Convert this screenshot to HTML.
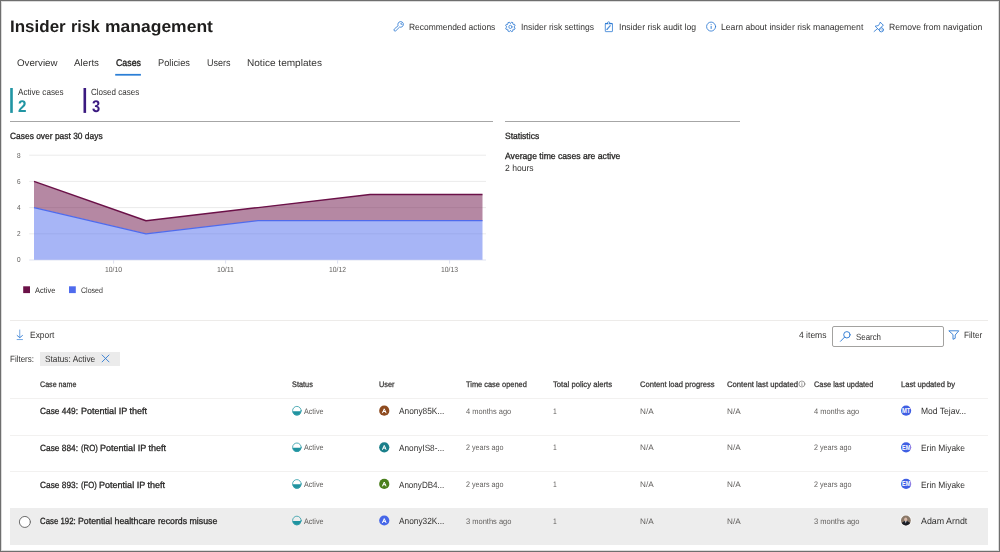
<!DOCTYPE html>
<html><head><meta charset="utf-8"><title>Insider risk management</title>
<style>
html,body{margin:0;padding:0;background:#fff;}
body{width:1000px;height:552px;position:relative;overflow:hidden;font-family:"Liberation Sans",sans-serif;}
.t{position:absolute;white-space:nowrap;transform-origin:0 50%;display:inline-block;text-rendering:geometricPrecision;}
.a{position:absolute;}
.frame{position:absolute;left:0;top:0;width:998px;height:550px;border:1px solid #6e6e6e;box-sizing:content-box;}
.frame2{position:absolute;left:1px;top:1px;width:996px;height:548px;border:1px solid #dcdcdc;box-sizing:content-box;}
.av{position:absolute;width:10.4px;height:10.4px;border-radius:50%;color:#fff;font-size:5.5px;font-weight:700;text-align:center;line-height:10.4px;}
</style></head><body>
<!-- section rules -->
<div class="a" style="left:10px;top:121px;width:483px;height:1px;background:#a6a6a6"></div>
<div class="a" style="left:505px;top:121px;width:235px;height:1px;background:#a6a6a6"></div>
<div class="a" style="left:10px;top:320px;width:978px;height:1px;background:#edebe9"></div>
<!-- chart -->
<svg class="a" style="left:0;top:140px" width="500" height="170" viewBox="0 140 500 170">
 <g stroke="#ebebeb" stroke-width="1">
  <line x1="29.2" y1="155.20" x2="486" y2="155.20"/>
  <line x1="29.2" y1="181.40" x2="486" y2="181.40"/>
  <line x1="29.2" y1="207.60" x2="486" y2="207.60"/>
  <line x1="29.2" y1="233.80" x2="486" y2="233.80"/>
  <line x1="29.2" y1="260" x2="486" y2="260" stroke="#dfe3f1"/>
  <line x1="113.6" y1="260" x2="113.6" y2="263.6" stroke="#dde1f0"/>
  <line x1="225.6" y1="260" x2="225.6" y2="263.6" stroke="#dde1f0"/>
  <line x1="337.6" y1="260" x2="337.6" y2="263.6" stroke="#dde1f0"/>
  <line x1="449.6" y1="260" x2="449.6" y2="263.6" stroke="#dde1f0"/>
 </g>
 <polygon points="34,181.40 146,220.70 258,207.60 370,194.50 482.5,194.50 482.5,220.70 370,220.70 258,220.70 146,233.80 34,207.60" fill="#6b1148" fill-opacity="0.5"/>
 <polygon points="34,207.60 146,233.80 258,220.70 370,220.70 482.5,220.70 482.5,259.7 34,259.7" fill="#4f6bed" fill-opacity="0.5"/>
 <polyline points="34,181.40 146,220.70 258,207.60 370,194.50 482.5,194.50" fill="none" stroke="#6b1148" stroke-width="1.45" stroke-linejoin="round"/>
 <polyline points="34,207.60 146,233.80 258,220.70 370,220.70 482.5,220.70" fill="none" stroke="#4f6bed" stroke-width="1.25" stroke-linejoin="round"/>
 <rect x="23.2" y="286.3" width="6.8" height="6.8" fill="#6b1148"/>
 <rect x="69" y="286.3" width="6.8" height="6.8" fill="#4f6bed"/>
</svg>
<!-- filter chip -->
<div class="a" style="left:40px;top:351.5px;width:80.2px;height:14.6px;background:#ebebeb"></div>
<!-- search box -->
<div class="a" style="left:832px;top:326.4px;width:110.2px;height:18.3px;border:1px solid #a3a2a0;border-radius:2px;box-sizing:content-box"></div>
<!-- row separators -->
<div class="a" style="left:10px;top:398px;width:978px;height:1px;background:#f2f1f0"></div>
<div class="a" style="left:10px;top:434.6px;width:978px;height:1px;background:#f2f1f0"></div>
<div class="a" style="left:10px;top:471.2px;width:978px;height:1px;background:#f2f1f0"></div>
<!-- highlighted row -->
<div class="a" style="left:10.3px;top:508.4px;width:977.6px;height:36.3px;background:#ededed"></div>
<svg class="a" style="left:0;top:0" width="1000" height="552" viewBox="0 0 1000 552" fill="none" stroke-linecap="round" stroke-linejoin="round">
<rect x="115.2" y="73.9" width="25.7" height="1.75" fill="#2b7fd6"/>
<rect x="10.2" y="88" width="2.6" height="24.9" fill="#2195a3"/>
<rect x="83.5" y="88" width="2.6" height="24.9" fill="#3b1a80"/>
<g stroke="#2f7bd3" stroke-width="0.85"><path d="M397.98 25.39 A2.8 2.8 0 1 1 399.61 27.02 L395.81 30.81 A1.15 1.15 0 0 1 394.19 29.19 Z"/><path d="M402.0 22.6 L400.6 24.0 L402.1 24.4" stroke-width="0.8"/></g>
<path d="M510.75 23.17 L511.46 22.17 L513.00 22.81 L512.79 24.01 L513.29 24.51 L514.49 24.30 L515.13 25.84 L514.13 26.55 L514.13 27.25 L515.13 27.96 L514.49 29.50 L513.29 29.29 L512.79 29.79 L513.00 30.99 L511.46 31.63 L510.75 30.63 L510.05 30.63 L509.34 31.63 L507.80 30.99 L508.01 29.79 L507.51 29.29 L506.31 29.50 L505.67 27.96 L506.67 27.25 L506.67 26.55 L505.67 25.84 L506.31 24.30 L507.51 24.51 L508.01 24.01 L507.80 22.81 L509.34 22.17 L510.05 23.17Z" stroke="#2f7bd3" stroke-width="0.85"/>
<circle cx="510.4" cy="26.9" r="1.6" stroke="#2f7bd3" stroke-width="0.75"/>
<g stroke="#2f7bd3" stroke-width="0.8"><rect x="605.3" y="23.45" width="7.15" height="8.2" rx="0.4"/><path d="M605.5 23.6 H612.3" stroke-width="1.25" stroke-linecap="butt"/><path d="M607.4 23.0 A1.25 1.25 0 0 1 609.9 23.0" /><circle cx="608.65" cy="23.55" r="0.55" fill="#fff" stroke="none"/><path d="M607.0 29.4 L610.5 25.4" stroke-width="1.3" stroke-linecap="butt" stroke-opacity="0.85"/><path d="M606.7 29.8 L607.3 29.2" stroke-width="1.0" stroke-linecap="round"/></g>
<circle cx="711.1" cy="26.6" r="4.5" stroke="#2f7bd3" stroke-width="0.85"/>
<path d="M711.15 25.9 V28.9" stroke="#2f7bd3" stroke-width="0.95" stroke-linecap="butt"/><circle cx="711.15" cy="24.5" r="0.5" fill="#2f7bd3"/>
<g stroke="#2f7bd3" stroke-width="0.85"><path d="M880.4 22.3 L883.4 25.3 L882.4 25.8 L881.0 27.9 L880.6 31.6 L875.1 26.2 L878.4 25.6 L879.9 23.3 Z"/><path d="M877.4 28.8 L874.1 31.5"/><circle cx="881.35" cy="29.85" r="2.05" fill="#fff"/><path d="M880.3 28.8 L882.4 30.9" stroke-width="0.6" stroke-opacity="0.8"/></g>
<g stroke="#2f7bd3" stroke-width="0.9"><path d="M19.75 330 V337.4" stroke-opacity="0.75"/><path d="M17.15 335.5 L19.75 337.7 L22.45 335.5"/><path d="M17.1 339.55 H22.5" stroke-opacity="0.75"/></g>
<g stroke="#2f7bd3" stroke-width="0.95"><circle cx="846.9" cy="334.8" r="3.2"/><path d="M844.6 337.1 L840.5 341.3"/></g>
<path d="M949.2 330.8 H958.8 L955.2 335 V338.3 L953 339.3 V335 Z" stroke="#2f7bd3" stroke-width="0.9"/>
<path d="M102.1 355 L109 361.9 M109 355 L102.1 361.9" stroke="#2f7bd3" stroke-width="0.9"/>
<circle cx="801.9" cy="384" r="3.0" stroke="#6a6866" stroke-width="0.65"/>
<path d="M801.9 383.6 V385.6" stroke="#6a6866" stroke-width="0.65"/><circle cx="801.9" cy="382.4" r="0.4" fill="#6a6866"/>
<circle cx="24.9" cy="521.95" r="5.5" stroke="#6e6e6e" stroke-width="1" fill="#fff"/>
<path d="M292.55 411.15 A4.35 4.35 0 0 0 301.25 411.15 Z" fill="#1f93a0"/>
<circle cx="296.9" cy="410.7" r="4.3" stroke="#38a0ab" stroke-width="0.85"/>
<circle cx="384.25" cy="410.7" r="5.1" fill="#8e4b1f"/>
<path d="M382.55 412.80 L384.25 408.80 L385.95 412.80 M383.2 411.50 H385.3" stroke="#fff" stroke-width="1.0"/>
<path d="M292.55 447.75 A4.35 4.35 0 0 0 301.25 447.75 Z" fill="#1f93a0"/>
<circle cx="296.9" cy="447.3" r="4.3" stroke="#38a0ab" stroke-width="0.85"/>
<circle cx="384.25" cy="447.3" r="5.1" fill="#1a7f8a"/>
<path d="M382.55 449.40 L384.25 445.40 L385.95 449.40 M383.2 448.10 H385.3" stroke="#fff" stroke-width="1.0"/>
<path d="M292.55 484.35 A4.35 4.35 0 0 0 301.25 484.35 Z" fill="#1f93a0"/>
<circle cx="296.9" cy="483.9" r="4.3" stroke="#38a0ab" stroke-width="0.85"/>
<circle cx="384.25" cy="483.9" r="5.1" fill="#4a7f1c"/>
<path d="M382.55 486.00 L384.25 482.00 L385.95 486.00 M383.2 484.70 H385.3" stroke="#fff" stroke-width="1.0"/>
<path d="M292.55 520.95 A4.35 4.35 0 0 0 301.25 520.95 Z" fill="#1f93a0"/>
<circle cx="296.9" cy="520.5" r="4.3" stroke="#38a0ab" stroke-width="0.85"/>
<circle cx="384.25" cy="520.5" r="5.1" fill="#4667e8"/>
<path d="M382.55 522.60 L384.25 518.60 L385.95 522.60 M383.2 521.30 H385.3" stroke="#fff" stroke-width="1.0"/>
<circle cx="906.1" cy="410.7" r="5.1" fill="#3f5fe3"/>
<text x="906.1" y="413.05" text-anchor="middle" font-family="Liberation Sans, sans-serif" font-weight="700" font-size="6.6" fill="#fff" textLength="8.4" lengthAdjust="spacingAndGlyphs">MT</text>
<circle cx="906.1" cy="447.3" r="5.1" fill="#3f5fe3"/>
<text x="906.1" y="449.65" text-anchor="middle" font-family="Liberation Sans, sans-serif" font-weight="700" font-size="6.6" fill="#fff" textLength="8.4" lengthAdjust="spacingAndGlyphs">EM</text>
<circle cx="906.1" cy="483.9" r="5.1" fill="#3f5fe3"/>
<text x="906.1" y="486.25" text-anchor="middle" font-family="Liberation Sans, sans-serif" font-weight="700" font-size="6.6" fill="#fff" textLength="8.4" lengthAdjust="spacingAndGlyphs">EM</text>
<defs><clipPath id="pc"><circle cx="905.9" cy="520.50" r="4.9"/></clipPath></defs>
<circle cx="905.9" cy="520.5" r="5.7" fill="#fafafa"/>
<g clip-path="url(#pc)"><rect x="900" y="514.5" width="12" height="12" fill="#8a7868"/><ellipse cx="905.9" cy="525.10" rx="4.6" ry="4.2" fill="#1b1e25"/><ellipse cx="905.7" cy="519.30" rx="1.5" ry="1.9" fill="#d9b9a8"/><path d="M905 521.10 L905.8 523.50 L906.6 521.10 Z" fill="#cfd3e0" stroke="none"/></g>
</svg>
<div id="txt" style="position:absolute;left:0;top:0;width:1000px;height:552px;will-change:transform">
<span class="t" style="left:9.90px;top:19px;font-size:16.6px;line-height:16.6px;font-weight:700;color:#1f1e1d;transform:scaleX(1.0235)">Insider</span>
<span class="t" style="left:71.00px;top:19px;font-size:16.6px;line-height:16.6px;font-weight:700;color:#1f1e1d;transform:scaleX(0.9752)">risk</span>
<span class="t" style="left:104.90px;top:19px;font-size:16.6px;line-height:16.6px;font-weight:700;color:#1f1e1d;transform:scaleX(1.0541)">management</span>
<span class="t" style="left:16.50px;top:59px;font-size:9.7px;line-height:9.7px;font-weight:400;color:#343332;transform:scaleX(1.0031)">Overview</span>
<span class="t" style="left:73.50px;top:59px;font-size:9.7px;line-height:9.7px;font-weight:400;color:#343332;transform:scaleX(1.0095)">Alerts</span>
<span class="t" style="left:115.50px;top:59px;font-size:9.7px;line-height:9.7px;font-weight:400;color:#252423;transform:scaleX(0.9101);-webkit-text-stroke:0.35px #252423">Cases</span>
<span class="t" style="left:157.50px;top:59px;font-size:9.7px;line-height:9.7px;font-weight:400;color:#343332;transform:scaleX(0.9584)">Policies</span>
<span class="t" style="left:206.50px;top:59px;font-size:9.7px;line-height:9.7px;font-weight:400;color:#343332;transform:scaleX(0.9284)">Users</span>
<span class="t" style="left:247.00px;top:59px;font-size:9.7px;line-height:9.7px;font-weight:400;color:#343332;transform:scaleX(1.0394)">Notice templates</span>
<span class="t" style="left:408.70px;top:23px;font-size:9px;line-height:9px;font-weight:400;color:#343332;transform:scaleX(0.9374)">Recommended actions</span>
<span class="t" style="left:520.70px;top:23px;font-size:9px;line-height:9px;font-weight:400;color:#343332;transform:scaleX(0.9464)">Insider risk settings</span>
<span class="t" style="left:618.90px;top:23px;font-size:9px;line-height:9px;font-weight:400;color:#343332;transform:scaleX(0.9632)">Insider risk audit log</span>
<span class="t" style="left:721.40px;top:23px;font-size:9px;line-height:9px;font-weight:400;color:#343332;transform:scaleX(0.9576)">Learn about insider risk management</span>
<span class="t" style="left:888.80px;top:23px;font-size:9px;line-height:9px;font-weight:400;color:#343332;transform:scaleX(0.9554)">Remove from navigation</span>
<span class="t" style="left:18.00px;top:88px;font-size:9px;line-height:9px;font-weight:400;color:#343332;transform:scaleX(0.9024)">Active cases</span>
<span class="t" style="left:91.20px;top:88px;font-size:9px;line-height:9px;font-weight:400;color:#343332;transform:scaleX(0.8921)">Closed cases</span>
<span class="t" style="left:18.30px;top:98px;font-size:17px;line-height:17px;font-weight:700;color:#2195a3;transform:scaleX(0.8924)">2</span>
<span class="t" style="left:92.00px;top:98px;font-size:17px;line-height:17px;font-weight:700;color:#3b1a80;transform:scaleX(0.8660)">3</span>
<span class="t" style="left:10.40px;top:132px;font-size:9px;line-height:9px;font-weight:400;color:#252423;transform:scaleX(0.9348);-webkit-text-stroke:0.28px #252423">Cases over past 30 days</span>
<span class="t" style="left:505.30px;top:132px;font-size:9px;line-height:9px;font-weight:400;color:#252423;transform:scaleX(0.9496);-webkit-text-stroke:0.28px #252423">Statistics</span>
<span class="t" style="left:505.30px;top:152px;font-size:9px;line-height:9px;font-weight:400;color:#252423;transform:scaleX(0.9576);-webkit-text-stroke:0.28px #252423">Average time cases are active</span>
<span class="t" style="left:505.30px;top:164px;font-size:9px;line-height:9px;font-weight:400;color:#343332;transform:scaleX(0.9523)">2 hours</span>
<span class="t" style="left:16.90px;top:152px;font-size:7.3px;line-height:7.3px;font-weight:400;color:#605e5c;transform:scaleX(0.8862)">8</span>
<span class="t" style="left:16.90px;top:178px;font-size:7.3px;line-height:7.3px;font-weight:400;color:#605e5c;transform:scaleX(0.8862)">6</span>
<span class="t" style="left:16.90px;top:204px;font-size:7.3px;line-height:7.3px;font-weight:400;color:#605e5c;transform:scaleX(0.8862)">4</span>
<span class="t" style="left:16.90px;top:230px;font-size:7.3px;line-height:7.3px;font-weight:400;color:#605e5c;transform:scaleX(0.8862)">2</span>
<span class="t" style="left:16.90px;top:256px;font-size:7.3px;line-height:7.3px;font-weight:400;color:#605e5c;transform:scaleX(0.8862)">0</span>
<span class="t" style="left:105.20px;top:266px;font-size:7.4px;line-height:7.4px;font-weight:400;color:#605e5c;transform:scaleX(0.9189)">10/10</span>
<span class="t" style="left:217.20px;top:266px;font-size:7.4px;line-height:7.4px;font-weight:400;color:#605e5c;transform:scaleX(0.9469)">10/11</span>
<span class="t" style="left:329.20px;top:266px;font-size:7.4px;line-height:7.4px;font-weight:400;color:#605e5c;transform:scaleX(0.9189)">10/12</span>
<span class="t" style="left:441.20px;top:266px;font-size:7.4px;line-height:7.4px;font-weight:400;color:#605e5c;transform:scaleX(0.9189)">10/13</span>
<span class="t" style="left:34.50px;top:287px;font-size:8px;line-height:8px;font-weight:400;color:#343332;transform:scaleX(0.9313)">Active</span>
<span class="t" style="left:80.60px;top:287px;font-size:8px;line-height:8px;font-weight:400;color:#343332;transform:scaleX(0.8793)">Closed</span>
<span class="t" style="left:30.00px;top:331px;font-size:9px;line-height:9px;font-weight:400;color:#343332;transform:scaleX(0.9379)">Export</span>
<span class="t" style="left:799.40px;top:331px;font-size:9px;line-height:9px;font-weight:400;color:#343332;transform:scaleX(0.9478)">4 items</span>
<span class="t" style="left:855.50px;top:333px;font-size:9px;line-height:9px;font-weight:400;color:#343332;transform:scaleX(0.8762)">Search</span>
<span class="t" style="left:964.40px;top:331px;font-size:9px;line-height:9px;font-weight:400;color:#343332;transform:scaleX(0.9100)">Filter</span>
<span class="t" style="left:10.40px;top:355px;font-size:9px;line-height:9px;font-weight:400;color:#343332;transform:scaleX(0.8889)">Filters:</span>
<span class="t" style="left:44.80px;top:355px;font-size:9px;line-height:9px;font-weight:400;color:#343332;transform:scaleX(0.9206)">Status: Active</span>
<span class="t" style="left:40.00px;top:381px;font-size:8px;line-height:8px;font-weight:400;color:#343332;transform:scaleX(0.8895);-webkit-text-stroke:0.25px #343332">Case name</span>
<span class="t" style="left:292.20px;top:381px;font-size:8px;line-height:8px;font-weight:400;color:#343332;transform:scaleX(0.9168);-webkit-text-stroke:0.25px #343332">Status</span>
<span class="t" style="left:379.00px;top:381px;font-size:8px;line-height:8px;font-weight:400;color:#343332;transform:scaleX(0.9117);-webkit-text-stroke:0.25px #343332">User</span>
<span class="t" style="left:466.20px;top:381px;font-size:8px;line-height:8px;font-weight:400;color:#343332;transform:scaleX(0.9278);-webkit-text-stroke:0.25px #343332">Time case opened</span>
<span class="t" style="left:553.00px;top:381px;font-size:8px;line-height:8px;font-weight:400;color:#343332;transform:scaleX(0.9615);-webkit-text-stroke:0.25px #343332">Total policy alerts</span>
<span class="t" style="left:640.10px;top:381px;font-size:8px;line-height:8px;font-weight:400;color:#343332;transform:scaleX(0.9477);-webkit-text-stroke:0.25px #343332">Content load progress</span>
<span class="t" style="left:726.70px;top:381px;font-size:8px;line-height:8px;font-weight:400;color:#343332;transform:scaleX(0.9615);-webkit-text-stroke:0.25px #343332">Content last updated</span>
<span class="t" style="left:814.10px;top:381px;font-size:8px;line-height:8px;font-weight:400;color:#343332;transform:scaleX(0.9194);-webkit-text-stroke:0.25px #343332">Case last updated</span>
<span class="t" style="left:901.00px;top:381px;font-size:8px;line-height:8px;font-weight:400;color:#343332;transform:scaleX(0.9484);-webkit-text-stroke:0.25px #343332">Last updated by</span>
<span class="t" style="left:40.20px;top:407px;font-size:9px;line-height:9px;font-weight:400;color:#252423;transform:scaleX(0.9261);-webkit-text-stroke:0.28px #252423">Case 449:</span>
<span class="t" style="left:80.50px;top:407px;font-size:9px;line-height:9px;font-weight:400;color:#252423;transform:scaleX(1.0032);-webkit-text-stroke:0.28px #252423">Potential IP theft</span>
<span class="t" style="left:304.20px;top:408px;font-size:8px;line-height:8px;font-weight:400;color:#605e5c;transform:scaleX(0.8946)">Active</span>
<span class="t" style="left:399.00px;top:407px;font-size:9px;line-height:9px;font-weight:400;color:#343332;transform:scaleX(0.9236)">Anony85K...</span>
<span class="t" style="left:466.20px;top:408px;font-size:8px;line-height:8px;font-weight:400;color:#605e5c;transform:scaleX(0.9323)">4 months ago</span>
<span class="t" style="left:553.20px;top:408px;font-size:8px;line-height:8px;font-weight:400;color:#605e5c;transform:scaleX(0.8500)">1</span>
<span class="t" style="left:640.00px;top:408px;font-size:8px;line-height:8px;font-weight:400;color:#605e5c;transform:scaleX(1.0192)">N/A</span>
<span class="t" style="left:726.70px;top:408px;font-size:8px;line-height:8px;font-weight:400;color:#605e5c;transform:scaleX(1.0192)">N/A</span>
<span class="t" style="left:814.00px;top:408px;font-size:8px;line-height:8px;font-weight:400;color:#605e5c;transform:scaleX(0.9323)">4 months ago</span>
<span class="t" style="left:921.00px;top:407px;font-size:9px;line-height:9px;font-weight:400;color:#343332;transform:scaleX(0.9475)">Mod Tejav...</span>
<span class="t" style="left:40.20px;top:444px;font-size:9px;line-height:9px;font-weight:400;color:#252423;transform:scaleX(0.9261);-webkit-text-stroke:0.28px #252423">Case 884:</span>
<span class="t" style="left:80.50px;top:444px;font-size:9px;line-height:9px;font-weight:400;color:#252423;transform:scaleX(0.8615);-webkit-text-stroke:0.28px #252423">(RO)</span>
<span class="t" style="left:100.40px;top:444px;font-size:9px;line-height:9px;font-weight:400;color:#252423;transform:scaleX(1.0032);-webkit-text-stroke:0.28px #252423">Potential IP theft</span>
<span class="t" style="left:304.20px;top:444px;font-size:8px;line-height:8px;font-weight:400;color:#605e5c;transform:scaleX(0.8946)">Active</span>
<span class="t" style="left:399.00px;top:444px;font-size:9px;line-height:9px;font-weight:400;color:#343332;transform:scaleX(0.9146)">AnonyIS8-...</span>
<span class="t" style="left:466.20px;top:444px;font-size:8px;line-height:8px;font-weight:400;color:#605e5c;transform:scaleX(0.8969)">2 years ago</span>
<span class="t" style="left:553.20px;top:444px;font-size:8px;line-height:8px;font-weight:400;color:#605e5c;transform:scaleX(0.8500)">1</span>
<span class="t" style="left:640.00px;top:444px;font-size:8px;line-height:8px;font-weight:400;color:#605e5c;transform:scaleX(1.0192)">N/A</span>
<span class="t" style="left:726.70px;top:444px;font-size:8px;line-height:8px;font-weight:400;color:#605e5c;transform:scaleX(1.0192)">N/A</span>
<span class="t" style="left:814.00px;top:444px;font-size:8px;line-height:8px;font-weight:400;color:#605e5c;transform:scaleX(0.8945)">2 years ago</span>
<span class="t" style="left:921.00px;top:444px;font-size:9px;line-height:9px;font-weight:400;color:#343332;transform:scaleX(0.9359)">Erin Miyake</span>
<span class="t" style="left:40.20px;top:481px;font-size:9px;line-height:9px;font-weight:400;color:#252423;transform:scaleX(0.9261);-webkit-text-stroke:0.28px #252423">Case 893:</span>
<span class="t" style="left:80.50px;top:481px;font-size:9px;line-height:9px;font-weight:400;color:#252423;transform:scaleX(0.8541);-webkit-text-stroke:0.28px #252423">(FO)</span>
<span class="t" style="left:99.40px;top:481px;font-size:9px;line-height:9px;font-weight:400;color:#252423;transform:scaleX(1.0032);-webkit-text-stroke:0.28px #252423">Potential IP theft</span>
<span class="t" style="left:304.20px;top:481px;font-size:8px;line-height:8px;font-weight:400;color:#605e5c;transform:scaleX(0.8946)">Active</span>
<span class="t" style="left:399.00px;top:481px;font-size:9px;line-height:9px;font-weight:400;color:#343332;transform:scaleX(0.8965)">AnonyDB4...</span>
<span class="t" style="left:466.20px;top:481px;font-size:8px;line-height:8px;font-weight:400;color:#605e5c;transform:scaleX(0.8969)">2 years ago</span>
<span class="t" style="left:553.20px;top:481px;font-size:8px;line-height:8px;font-weight:400;color:#605e5c;transform:scaleX(0.8500)">1</span>
<span class="t" style="left:640.00px;top:481px;font-size:8px;line-height:8px;font-weight:400;color:#605e5c;transform:scaleX(1.0192)">N/A</span>
<span class="t" style="left:726.70px;top:481px;font-size:8px;line-height:8px;font-weight:400;color:#605e5c;transform:scaleX(1.0192)">N/A</span>
<span class="t" style="left:814.00px;top:481px;font-size:8px;line-height:8px;font-weight:400;color:#605e5c;transform:scaleX(0.8945)">2 years ago</span>
<span class="t" style="left:921.00px;top:481px;font-size:9px;line-height:9px;font-weight:400;color:#343332;transform:scaleX(0.9359)">Erin Miyake</span>
<span class="t" style="left:40.20px;top:517px;font-size:9px;line-height:9px;font-weight:400;color:#252423;transform:scaleX(0.8701);-webkit-text-stroke:0.28px #252423">Case 192:</span>
<span class="t" style="left:78.20px;top:517px;font-size:9px;line-height:9px;font-weight:400;color:#252423;transform:scaleX(0.9736);-webkit-text-stroke:0.28px #252423">Potential healthcare records misuse</span>
<span class="t" style="left:304.20px;top:518px;font-size:8px;line-height:8px;font-weight:400;color:#605e5c;transform:scaleX(0.8946)">Active</span>
<span class="t" style="left:399.00px;top:517px;font-size:9px;line-height:9px;font-weight:400;color:#343332;transform:scaleX(0.9236)">Anony32K...</span>
<span class="t" style="left:466.20px;top:518px;font-size:8px;line-height:8px;font-weight:400;color:#605e5c;transform:scaleX(0.9364)">3 months ago</span>
<span class="t" style="left:553.20px;top:518px;font-size:8px;line-height:8px;font-weight:400;color:#605e5c;transform:scaleX(0.8500)">1</span>
<span class="t" style="left:640.00px;top:518px;font-size:8px;line-height:8px;font-weight:400;color:#605e5c;transform:scaleX(1.0192)">N/A</span>
<span class="t" style="left:726.70px;top:518px;font-size:8px;line-height:8px;font-weight:400;color:#605e5c;transform:scaleX(1.0192)">N/A</span>
<span class="t" style="left:814.00px;top:518px;font-size:8px;line-height:8px;font-weight:400;color:#605e5c;transform:scaleX(0.9364)">3 months ago</span>
<span class="t" style="left:921.00px;top:517px;font-size:9px;line-height:9px;font-weight:400;color:#343332;transform:scaleX(0.9845)">Adam Arndt</span>
</div>
<div class="frame2"></div><div class="frame"></div>
</body></html>
